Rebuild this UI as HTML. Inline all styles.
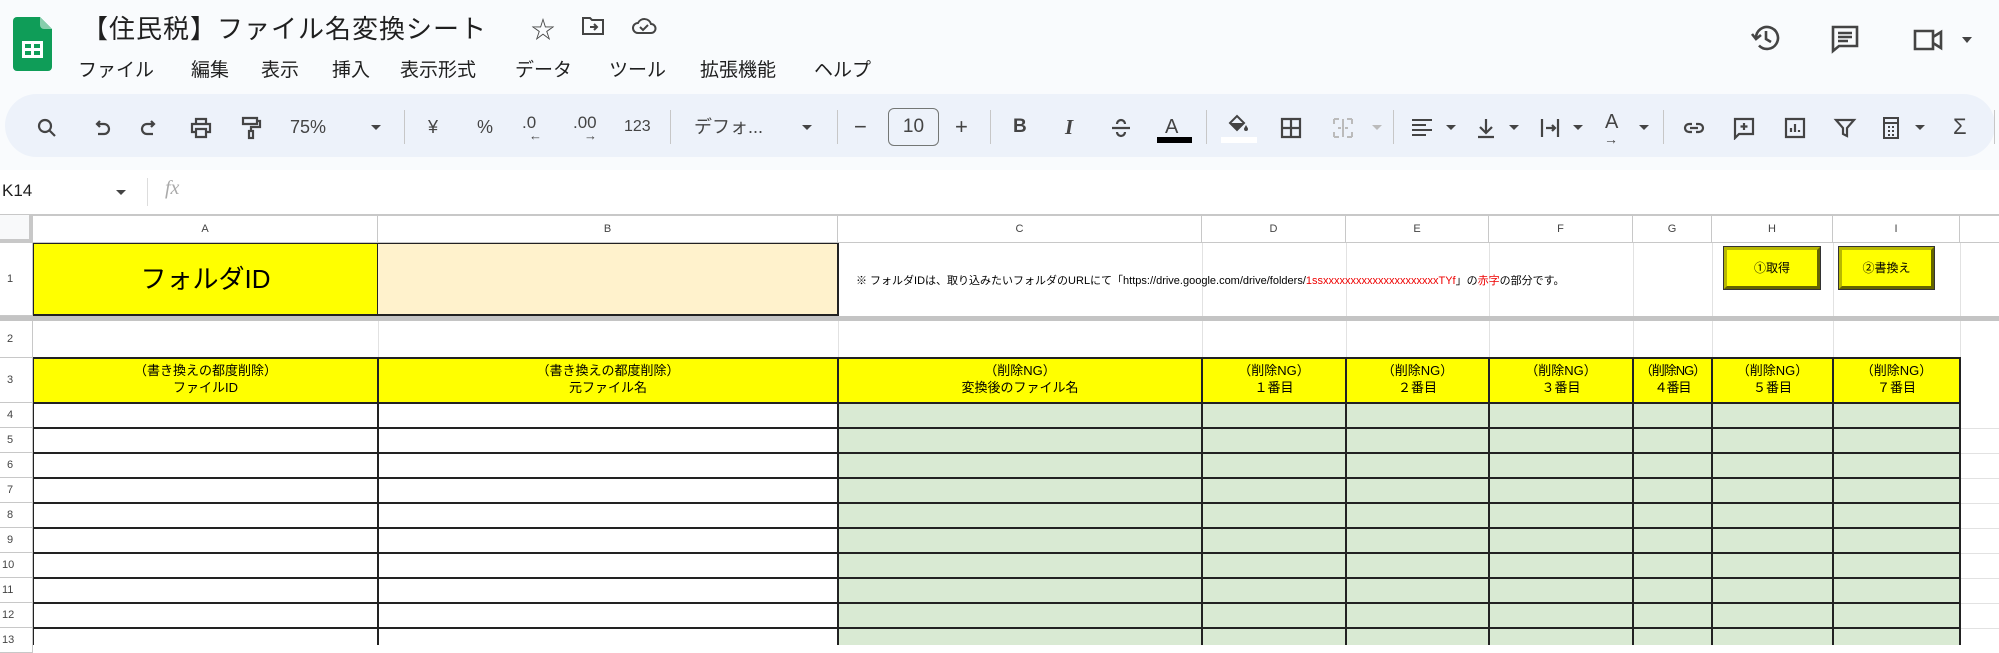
<!DOCTYPE html>
<html><head><meta charset="utf-8">
<style>
*{margin:0;padding:0;box-sizing:border-box}
body{width:1999px;height:645px;overflow:hidden;background:#fff;font-family:"Liberation Sans","Noto Sans CJK JP",sans-serif;position:relative;color:#1f1f1f}
.a{position:absolute}
.top{left:0;top:0;width:1999px;height:170px;background:#f9fbfd}
.pill{left:5px;top:94px;width:1990px;height:63px;background:#edf2fa;border-radius:32px}
.menu{top:55px;font-size:19px;color:#1f1f1f}
.ic{top:116px;width:24px;height:24px}
.t{top:115px;font-size:18px;color:#444;line-height:24px}
.sep{top:110px;width:1px;height:34px;background:#c7c7c7}
.dd{width:0;height:0;border-left:5px solid transparent;border-right:5px solid transparent;border-top:5px solid #444}
.ch{top:215px;height:28px;font-size:11px;color:#444;text-align:center;line-height:28px;border-right:1px solid #c8c8c8;border-bottom:1px solid #c8c8c8}
.rh{left:0;width:33px;font-size:11px;color:#444;padding-left:7px;border-bottom:1px solid #c8c8c8;border-right:1px solid #c8c8c8}
.hl{height:2px;background:#222;left:33px;width:1928px}
.vl{width:2px;background:#222}
.gl{width:1px;background:#e2e2e2}
.h3{top:358px;height:45px;font-size:13px;text-align:center;line-height:17px;padding-top:4px;color:#000}
.btn{top:247px;height:42px;background:#ffff00;border:3px outset #b8b800;outline:1px solid #333;font-size:12px;text-align:center;line-height:36px;color:#000}
svg{display:block}
</style></head><body>
<div class="a top"></div>
<!-- logo -->
<svg class="a" style="left:13px;top:17px" width="39" height="54" viewBox="0 0 39 54"><path d="M4 0h23l12 12v38a4 4 0 0 1-4 4H4a4 4 0 0 1-4-4V4a4 4 0 0 1 4-4z" fill="#0f9d58"/><path d="M27 0l12 12H31a4 4 0 0 1-4-4z" fill="#87ceac"/><rect x="9" y="24" width="21" height="17" fill="#fff"/><rect x="12" y="27" width="6" height="4" fill="#0f9d58"/><rect x="21" y="27" width="6" height="4" fill="#0f9d58"/><rect x="12" y="34" width="6" height="4" fill="#0f9d58"/><rect x="21" y="34" width="6" height="4" fill="#0f9d58"/></svg>
<div class="a" style="left:82px;top:9px;font-size:26px;letter-spacing:1px">【住民税】ファイル名変換シート</div>
<div class="a" style="left:531px;top:10px;font-size:24px;color:#444">☆</div>
<svg class="a" style="left:581px;top:15px" width="24" height="22" viewBox="0 0 24 22" fill="none" stroke="#444" stroke-width="2"><path d="M2 3h7l2 2h11v14H2z"/><path d="M9 12h7M13 9l3 3-3 3"/></svg>
<svg class="a" style="left:631px;top:14px" width="26" height="22" viewBox="0 0 26 22" fill="none" stroke="#444" stroke-width="2"><path d="M7 19a5 5 0 0 1 0-10 7 7 0 0 1 13 1 4.5 4.5 0 0 1 0 9z"/><path d="M9 13l3 3 5-5"/></svg>
<div class="a menu" style="left:78px">ファイル</div>
<div class="a menu" style="left:191px">編集</div>
<div class="a menu" style="left:261px">表示</div>
<div class="a menu" style="left:332px">挿入</div>
<div class="a menu" style="left:400px">表示形式</div>
<div class="a menu" style="left:515px">データ</div>
<div class="a menu" style="left:609px">ツール</div>
<div class="a menu" style="left:700px">拡張機能</div>
<div class="a menu" style="left:814px">ヘルプ</div>
<!-- top right -->
<svg class="a" style="left:1750px;top:22px" width="32" height="32" viewBox="0 0 32 32" fill="none" stroke="#444" stroke-width="2.6"><path d="M6 16a11 11 0 1 1 3 7.5"/><path d="M2 12l4 5 5-4"/><path d="M16 9v8l5 3"/></svg>
<svg class="a" style="left:1830px;top:24px" width="30" height="30" viewBox="0 0 30 30" fill="none" stroke="#444" stroke-width="2.6"><path d="M3 3h24v19H9l-6 5V3z"/><path d="M8 9h14M8 13h14M8 17h10"/></svg>
<svg class="a" style="left:1912px;top:27px" width="34" height="26" viewBox="0 0 34 26" fill="none" stroke="#444" stroke-width="2.6"><path d="M3 4h18v18H3zM21 10l8-5v16l-8-5"/></svg>
<div class="a dd" style="left:1962px;top:37px;border-top-width:6px"></div>
<!-- toolbar -->
<div class="a pill"></div>
<svg class="a ic" style="left:35px" viewBox="0 0 24 24" fill="none" stroke="#444" stroke-width="2.2"><circle cx="10" cy="10" r="6"/><path d="M14.5 14.5L20 20"/></svg>
<svg class="a ic" style="left:89px" viewBox="0 0 24 24" fill="none" stroke="#444" stroke-width="2.2"><path d="M8 8H15a4 4 0 0 1 0 10H9"/><path d="M11 5L8 8l3 3"/></svg>
<svg class="a ic" style="left:138px" viewBox="0 0 24 24" fill="none" stroke="#444" stroke-width="2.2"><path d="M16 8H9a4 4 0 0 0 0 10h6"/><path d="M13 5l3 3-3 3"/></svg>
<svg class="a ic" style="left:189px" viewBox="0 0 24 24" fill="none" stroke="#444" stroke-width="2.2"><path d="M7 8V3h10v5M7 16H3V8h18v8h-4M7 13h10v8H7z"/></svg>
<svg class="a ic" style="left:239px" viewBox="0 0 24 24" fill="none" stroke="#444" stroke-width="2.2"><path d="M4 2h14v6H4zM18 5h3v6h-9v4"/><rect x="10" y="15" width="4" height="7"/></svg>
<div class="a t" style="left:290px">75%</div>
<div class="a dd" style="left:371px;top:125px"></div>
<div class="a sep" style="left:404px"></div>
<div class="a t" style="left:428px">¥</div>
<div class="a t" style="left:477px">%</div>
<div class="a t" style="left:522px;font-size:17px;top:111px">.0</div><div class="a" style="left:529px;top:128px;font-size:13px;color:#444">←</div>
<div class="a t" style="left:573px;font-size:17px;top:111px">.00</div><div class="a" style="left:584px;top:128px;font-size:13px;color:#444">→</div>
<div class="a t" style="left:624px;font-size:16px">123</div>
<div class="a sep" style="left:670px"></div>
<div class="a t" style="left:694px">デフォ...</div>
<div class="a dd" style="left:802px;top:125px"></div>
<div class="a sep" style="left:837px"></div>
<div class="a t" style="left:854px;font-size:22px">−</div>
<div class="a" style="left:888px;top:108px;width:51px;height:38px;border:1.5px solid #747775;border-radius:6px;font-size:19px;text-align:center;line-height:35px;color:#444">10</div>
<div class="a t" style="left:955px;font-size:22px">+</div>
<div class="a sep" style="left:990px"></div>
<div class="a t" style="left:1013px;font-weight:bold;font-size:19px">B</div>
<div class="a t" style="left:1065px;font-style:italic;font-family:'Liberation Serif',serif;font-weight:bold;font-size:21px">I</div>
<svg class="a ic" style="left:1109px" viewBox="0 0 24 24" fill="none" stroke="#444" stroke-width="2.2"><path d="M3 12h18M8 8a4 4 0 0 1 8 0M8 16a4 4 0 0 0 8 0"/></svg>
<div class="a t" style="left:1165px;font-size:20px">A</div><div class="a" style="left:1157px;top:137px;width:35px;height:6px;background:#000"></div>
<div class="a sep" style="left:1206px"></div>
<svg class="a ic" style="left:1226px;top:112px" viewBox="0 0 24 24" fill="#444"><path d="M4 11l7-7 7 7-7 7z" fill="none" stroke="#444" stroke-width="2"/><path d="M4 11h14l-7 7z"/><path d="M20 13c1 2 2 3 2 4a2 2 0 0 1-4 0c0-1 1-2 2-4z"/></svg>
<div class="a" style="left:1221px;top:137px;width:36px;height:6px;background:#fff"></div>
<svg class="a ic" style="left:1279px" viewBox="0 0 24 24" fill="none" stroke="#444" stroke-width="2.2"><path d="M3 3h18v18H3zM12 3v18M3 12h18"/></svg>
<svg class="a ic" style="left:1331px" viewBox="0 0 24 24" fill="none" stroke="#bbb" stroke-width="2"><path d="M3 3h5M3 3v5M21 3h-5M21 3v5M3 21h5M3 21v-5M21 21h-5M21 21v-5M12 3v18M7 12h3M17 12h-3"/></svg>
<div class="a dd" style="left:1372px;top:125px;border-top-color:#bbb"></div>
<div class="a sep" style="left:1393px"></div>
<svg class="a ic" style="left:1410px" viewBox="0 0 24 24" fill="none" stroke="#444" stroke-width="2"><path d="M2 4h20M2 9h14M2 14h20M2 19h14"/></svg><div class="a dd" style="left:1446px;top:125px"></div>
<svg class="a ic" style="left:1474px" viewBox="0 0 24 24" fill="none" stroke="#444" stroke-width="2.2"><path d="M12 3v14M6 11l6 6 6-6M4 21h16"/></svg><div class="a dd" style="left:1509px;top:125px"></div>
<svg class="a ic" style="left:1538px" viewBox="0 0 24 24" fill="none" stroke="#444" stroke-width="2.2"><path d="M4 3v18M20 3v18M8 12h9M14 9l3 3-3 3"/></svg><div class="a dd" style="left:1573px;top:125px"></div>
<div class="a t" style="left:1605px;font-size:20px;top:110px">A</div><div class="a" style="left:1604px;top:131px;font-size:14px;color:#444">→</div><div class="a dd" style="left:1639px;top:125px"></div>
<div class="a sep" style="left:1663px"></div>
<svg class="a ic" style="left:1682px" viewBox="0 0 24 24" fill="none" stroke="#444" stroke-width="2.2"><path d="M10 8H7a4 4 0 0 0 0 8h3M14 8h3a4 4 0 0 1 0 8h-3M8 12h8"/></svg>
<svg class="a ic" style="left:1732px" viewBox="0 0 24 24" fill="none" stroke="#444" stroke-width="2.2"><path d="M3 3h18v15H7l-4 4zM12 7v7M8.5 10.5h7"/></svg>
<svg class="a ic" style="left:1783px" viewBox="0 0 24 24" fill="none" stroke="#444" stroke-width="2.2"><path d="M3 3h18v18H3zM8 16v-4M12 16V8M16 16v-2"/></svg>
<svg class="a ic" style="left:1833px" viewBox="0 0 24 24" fill="none" stroke="#444" stroke-width="2.2"><path d="M3 4h18l-7 8v8l-4-2v-6z"/></svg>
<svg class="a ic" style="left:1879px" viewBox="0 0 24 24" fill="none" stroke="#444" stroke-width="2"><path d="M5 2h14v20H5zM5 7h14M9 11h2M13 11h2M9 15h2M13 15h2M9 19h2M13 19h2"/></svg><div class="a dd" style="left:1915px;top:125px"></div>
<div class="a t" style="left:1953px;font-size:22px">Σ</div>
<div class="a sep" style="left:1994px"></div>
<!-- formula bar -->
<div class="a" style="left:2px;top:181px;font-size:17px">K14</div>
<div class="a dd" style="left:116px;top:190px"></div>
<div class="a" style="left:147px;top:178px;width:1px;height:28px;background:#ddd"></div>
<div class="a" style="left:165px;top:177px;font-size:20px;color:#aaa;font-style:italic;font-family:'Liberation Serif',serif">fx</div>
<!-- grid -->
<div class="a" style="left:0;top:214px;width:1999px;height:2px;background:#c8c8c8"></div>
<div class="a" style="left:0;top:215px;width:33px;height:28px;background:#f8f9fa;border-right:4px solid #c8c8c8;border-bottom:4px solid #c8c8c8"></div>
<div class="a ch" style="left:33px;width:345px">A</div>
<div class="a ch" style="left:378px;width:460px">B</div>
<div class="a ch" style="left:838px;width:364px">C</div>
<div class="a ch" style="left:1202px;width:144px">D</div>
<div class="a ch" style="left:1346px;width:143px">E</div>
<div class="a ch" style="left:1489px;width:144px">F</div>
<div class="a ch" style="left:1633px;width:79px">G</div>
<div class="a ch" style="left:1712px;width:121px">H</div>
<div class="a ch" style="left:1833px;width:127px">I</div>
<div class="a ch" style="left:1960px;width:40px"></div>
<!-- gray gridlines -->
<div class="a gl" style="left:1202px;top:243px;height:73px"></div>
<div class="a gl" style="left:1346px;top:243px;height:73px"></div>
<div class="a gl" style="left:1489px;top:243px;height:73px"></div>
<div class="a gl" style="left:1633px;top:243px;height:73px"></div>
<div class="a gl" style="left:1712px;top:243px;height:73px"></div>
<div class="a gl" style="left:1833px;top:243px;height:73px"></div>
<div class="a gl" style="left:1960px;top:243px;height:402px"></div>
<div class="a gl" style="left:378px;top:321px;height:37px"></div>
<div class="a gl" style="left:838px;top:321px;height:37px"></div>
<div class="a gl" style="left:1202px;top:321px;height:37px"></div>
<div class="a gl" style="left:1346px;top:321px;height:37px"></div>
<div class="a gl" style="left:1489px;top:321px;height:37px"></div>
<div class="a gl" style="left:1633px;top:321px;height:37px"></div>
<div class="a gl" style="left:1712px;top:321px;height:37px"></div>
<div class="a gl" style="left:1833px;top:321px;height:37px"></div>
<div class="a" style="left:1960px;top:428px;width:40px;height:1px;background:#e2e2e2"></div>
<div class="a" style="left:1960px;top:453px;width:40px;height:1px;background:#e2e2e2"></div>
<div class="a" style="left:1960px;top:478px;width:40px;height:1px;background:#e2e2e2"></div>
<div class="a" style="left:1960px;top:503px;width:40px;height:1px;background:#e2e2e2"></div>
<div class="a" style="left:1960px;top:528px;width:40px;height:1px;background:#e2e2e2"></div>
<div class="a" style="left:1960px;top:553px;width:40px;height:1px;background:#e2e2e2"></div>
<div class="a" style="left:1960px;top:578px;width:40px;height:1px;background:#e2e2e2"></div>
<div class="a" style="left:1960px;top:603px;width:40px;height:1px;background:#e2e2e2"></div>
<div class="a" style="left:1960px;top:628px;width:40px;height:1px;background:#e2e2e2"></div>
<!-- row headers -->
<div class="a rh" style="top:243px;height:73px;line-height:73px">1</div>
<div class="a rh" style="top:321px;height:37px;line-height:37px">2</div>
<div class="a rh" style="top:358px;height:45px;line-height:45px">3</div>
<div class="a rh" style="top:403px;height:25px;line-height:25px">4</div>
<div class="a rh" style="top:428px;height:25px;line-height:25px">5</div>
<div class="a rh" style="top:453px;height:25px;line-height:25px">6</div>
<div class="a rh" style="top:478px;height:25px;line-height:25px">7</div>
<div class="a rh" style="top:503px;height:25px;line-height:25px">8</div>
<div class="a rh" style="top:528px;height:25px;line-height:25px">9</div>
<div class="a rh" style="top:553px;height:25px;line-height:25px;padding-left:2px">10</div>
<div class="a rh" style="top:578px;height:25px;line-height:25px;padding-left:2px">11</div>
<div class="a rh" style="top:603px;height:25px;line-height:25px;padding-left:2px">12</div>
<div class="a rh" style="top:628px;height:25px;line-height:25px;padding-left:2px">13</div>
<!-- row1 -->
<div class="a" style="left:33px;top:243px;width:345px;height:73px;background:#ffff00;border:1px solid #222;border-bottom:2px solid #222;font-size:26px;text-align:center;line-height:70px;color:#000">フォルダID</div>
<div class="a" style="left:378px;top:243px;width:460px;height:73px;background:#fff2cc;border:1px solid #222;border-bottom:2px solid #222;border-left:none"></div>
<div class="a" style="left:856px;top:272px;font-size:11px;color:#000;white-space:nowrap">※ フォルダIDは、取り込みたいフォルダのURLにて「https://drive.google.com/drive/folders/<span style="color:#e00">1ssxxxxxxxxxxxxxxxxxxxxxTYf</span>」の<span style="color:#e00">赤字</span>の部分です。</div>
<div class="a btn" style="left:1724px;width:96px">①取得</div>
<div class="a btn" style="left:1839px;width:95px">②書換え</div>
<!-- frozen divider -->
<div class="a" style="left:0;top:316px;width:1999px;height:5px;background:#c4c4c4"></div>
<!-- row3 -->
<div class="a" style="left:33px;top:358px;width:1928px;height:45px;background:#ffff00"></div>
<div class="a h3" style="left:33px;width:345px">（書き換えの都度削除）<br>ファイルID</div>
<div class="a h3" style="left:378px;width:460px">（書き換えの都度削除）<br>元ファイル名</div>
<div class="a h3" style="left:838px;width:364px">（削除NG）<br>変換後のファイル名</div>
<div class="a h3" style="left:1202px;width:144px">（削除NG）<br>１番目</div>
<div class="a h3" style="left:1346px;width:143px">（削除NG）<br>２番目</div>
<div class="a h3" style="left:1489px;width:144px">（削除NG）<br>３番目</div>
<div class="a h3" style="left:1633px;width:79px;letter-spacing:-1px">（削除NG）<br>４番目</div>
<div class="a h3" style="left:1712px;width:121px">（削除NG）<br>５番目</div>
<div class="a h3" style="left:1833px;width:127px">（削除NG）<br>７番目</div>
<!-- green area -->
<div class="a" style="left:838px;top:403px;width:1123px;height:242px;background:#d9ead3"></div>
<!-- black lines -->
<div class="a hl" style="top:357px"></div>
<div class="a hl" style="top:402px"></div>
<div class="a hl" style="top:427px"></div>
<div class="a hl" style="top:452px"></div>
<div class="a hl" style="top:477px"></div>
<div class="a hl" style="top:502px"></div>
<div class="a hl" style="top:527px"></div>
<div class="a hl" style="top:552px"></div>
<div class="a hl" style="top:577px"></div>
<div class="a hl" style="top:602px"></div>
<div class="a hl" style="top:627px"></div>
<div class="a vl" style="left:33px;top:357px;height:288px;width:1px"></div>
<div class="a vl" style="left:377px;top:357px;height:288px"></div>
<div class="a vl" style="left:837px;top:243px;height:73px"></div>
<div class="a vl" style="left:837px;top:357px;height:288px"></div>
<div class="a vl" style="left:1201px;top:357px;height:288px"></div>
<div class="a vl" style="left:1345px;top:357px;height:288px"></div>
<div class="a vl" style="left:1488px;top:357px;height:288px"></div>
<div class="a vl" style="left:1632px;top:357px;height:288px"></div>
<div class="a vl" style="left:1711px;top:357px;height:288px"></div>
<div class="a vl" style="left:1832px;top:357px;height:288px"></div>
<div class="a vl" style="left:1959px;top:357px;height:288px"></div>
</body></html>
